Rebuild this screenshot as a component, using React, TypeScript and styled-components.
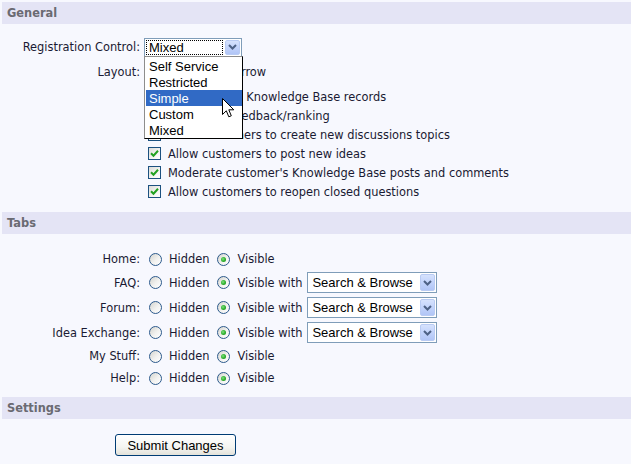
import React from "react";
import styled, { createGlobalStyle } from "styled-components";

const Global = createGlobalStyle`
  html, body { margin: 0; padding: 0; background: #f7f8fe; }
  body { font-family: "DejaVu Sans", Verdana, sans-serif; font-size: 11.4px; color: #1a1a33; }
`;

const Page = styled.div`
  padding: 2px 0 0 2px;
  min-height: 462px;
`;

const SectionHeader = styled.div`
  height: 22px;
  line-height: 22px;
  background: #e4e4f5;
  padding-left: 5px;
  font-weight: bold;
  font-size: 11.4px;
  color: #6a6a72;
`;

const Form = styled.div<{ $pt: number; $pb: number }>`
  display: grid;
  grid-template-columns: 138px 1fr;
  column-gap: 4px;
  padding: ${(p) => p.$pt}px 0 ${(p) => p.$pb}px;
`;

const Label = styled.div<{ $h: number }>`
  height: ${(p) => p.$h}px;
  display: flex;
  align-items: center;
  justify-content: flex-end;
  white-space: nowrap;
`;

const Control = styled.div<{ $h?: number; $pl?: number }>`
  ${(p) => (p.$h ? `height: ${p.$h}px;` : "")}
  padding-left: ${(p) => p.$pl ?? 0}px;
  display: flex;
  align-items: center;
  white-space: nowrap;
`;

const CheckList = styled.div`
  display: flex;
  flex-direction: column;
  padding-top: 3px;
`;

const CheckRow = styled.label`
  height: 19px;
  display: flex;
  align-items: center;
  padding-left: 4px;
`;

const Box = styled.span`
  width: 11px;
  height: 11px;
  border: 1px solid #1c5180;
  background: linear-gradient(135deg, #dcdcd7 0%, #f4f4f2 60%, #ffffff 100%);
  margin-right: 7px;
  display: inline-flex;
  align-items: center;
  justify-content: center;
  flex: none;
`;

const RadioOpt = styled.label`
  display: inline-flex;
  align-items: center;
  margin-right: 8px;
`;

const RadioCircle = styled.span<{ $on?: boolean }>`
  width: 11px;
  height: 11px;
  border-radius: 50%;
  border: 1px solid #2c5a8c;
  background: linear-gradient(135deg, #d4d4ce 0%, #f2f2f0 55%, #ffffff 100%);
  margin: 0 7px 0 0;
  display: inline-flex;
  align-items: center;
  justify-content: center;
  flex: none;
  &::after {
    content: "";
    display: ${(p) => (p.$on ? "block" : "none")};
    width: 5px;
    height: 5px;
    border-radius: 50%;
    background: radial-gradient(circle at 40% 40%, #7fe07f 0%, #2aae2a 55%, #1a7f1a 100%);
  }
`;

const SelectBox = styled.div<{ $w: number; $h: number; $ml?: number }>`
  position: relative;
  width: ${(p) => p.$w}px;
  height: ${(p) => p.$h}px;
  margin-left: ${(p) => p.$ml ?? 0}px;
  box-sizing: border-box;
  border: 1px solid #7f9db9;
  background: #fff;
  display: flex;
  align-items: center;
  font-family: "Liberation Sans", Arial, sans-serif;
  font-size: 13px;
  color: #000;
  flex: none;
`;

const SelectText = styled.span<{ $focus?: boolean }>`
  flex: 1;
  align-self: stretch;
  margin: 1px;
  padding-left: 3px;
  display: flex;
  align-items: center;
  outline: ${(p) => (p.$focus ? "1px dotted #000" : "none")};
  outline-offset: -1px;
`;

const ArrowBtn = styled.span`
  width: 15px;
  align-self: stretch;
  margin: 1px;
  box-sizing: border-box;
  border: 1px solid #b9cbf3;
  border-radius: 2px;
  background: linear-gradient(180deg, #d6e2fd 0%, #c2d3fb 50%, #b1c5f6 100%);
  display: flex;
  align-items: center;
  justify-content: center;
`;

const DropList = styled.div`
  position: absolute;
  left: -1px;
  top: 100%;
  width: 99px;
  box-sizing: border-box;
  border-left: 1px solid #8d8d8d;
  border-top: 1px solid #8d8d8d;
  border-right: 1px solid #000;
  border-bottom: 1px solid #000;
  background: #fff;
  z-index: 5;
  padding: 1px 0 0 1px;
`;

const DropItem = styled.div<{ $sel?: boolean }>`
  height: 16.2px;
  box-sizing: border-box;
  padding: 2px 0 0 3px;
  line-height: 14px;
  font-family: "Liberation Sans", Arial, sans-serif;
  font-size: 13px;
  color: ${(p) => (p.$sel ? "#fff" : "#000")};
  background: ${(p) => (p.$sel ? "#316ac5" : "transparent")};
`;

const Cursor = styled.svg`
  position: absolute;
  left: 77px;
  top: 59px;
  z-index: 6;
`;

const SettingsBody = styled.div`
  padding: 15px 0 0 113px;
`;

const Button = styled.button`
  width: 121px;
  height: 22px;
  border: 1px solid #003c74;
  border-radius: 3px;
  background: linear-gradient(180deg, #ffffff 0%, #f5f5f1 60%, #e3e2da 100%);
  font-family: "Liberation Sans", Arial, sans-serif;
  font-size: 13px;
  color: #000;
  padding: 0;
`;

const Chevron = () => (
  <svg width="9" height="6" viewBox="0 0 9 6">
    <path d="M1 1 L4.5 4.5 L8 1" stroke="#4d6185" strokeWidth="2" fill="none" />
  </svg>
);

const Check = () => (
  <Box>
    <svg width="9" height="9" viewBox="0 0 9 9">
      <path d="M1 4.2 L3.5 6.7 L8 1.8" stroke="#21a121" strokeWidth="2" fill="none" />
    </svg>
  </Box>
);

const Radio = ({ on, text }: { on?: boolean; text: string }) => (
  <RadioOpt>
    <RadioCircle $on={on} />
    {text}
  </RadioOpt>
);

const SearchSelect = () => (
  <SelectBox $w={130} $h={21} $ml={-3}>
    <SelectText>Search &amp; Browse</SelectText>
    <ArrowBtn>
      <Chevron />
    </ArrowBtn>
  </SelectBox>
);

const options = ["Self Service", "Restricted", "Simple", "Custom", "Mixed"];

const checks = [
  "Show related Knowledge Base records",
  "Allow user feedback/ranking",
  "Allow customers to create new discussions topics",
  "Allow customers to post new ideas",
  "Moderate customer's Knowledge Base posts and comments",
  "Allow customers to reopen closed questions",
];

const tabs: { name: string; h: number; sel?: boolean }[] = [
  { name: "Home", h: 22 },
  { name: "FAQ", h: 25, sel: true },
  { name: "Forum", h: 25, sel: true },
  { name: "Idea Exchange", h: 25, sel: true },
  { name: "My Stuff", h: 22 },
  { name: "Help", h: 22 },
];

export default function App() {
  return (
    <Page>
      <Global />
      <SectionHeader>General</SectionHeader>
      <Form $pt={10} $pb={11}>
        <Label $h={26}>Registration Control:</Label>
        <Control $h={26}>
          <SelectBox $w={98} $h={19}>
            <SelectText $focus>Mixed</SelectText>
            <ArrowBtn>
              <Chevron />
            </ArrowBtn>
            <DropList>
              {options.map((o) => (
                <DropItem key={o} $sel={o === "Simple"}>
                  {o}
                </DropItem>
              ))}
            </DropList>
            <Cursor width="13" height="20" viewBox="0 0 13 20">
              <path
                d="M0.5 0.5 L0.5 16.5 L4.3 12.8 L6.8 18.8 L9.3 17.8 L6.8 11.8 L11.8 11.8 Z"
                fill="#fff"
                stroke="#000"
                strokeWidth="1"
              />
            </Cursor>
          </SelectBox>
        </Control>
        <Label $h={24}>Layout:</Label>
        <Control $h={24} $pl={5}>
          <Radio text="Wide" />
          <Radio on text="Narrow" />
        </Control>
        <div />
        <Control>
          <CheckList>
            {checks.map((c) => (
              <CheckRow key={c}>
                <Check />
                {c}
              </CheckRow>
            ))}
          </CheckList>
        </Control>
      </Form>
      <SectionHeader>Tabs</SectionHeader>
      <Form $pt={14} $pb={8}>
        {tabs.map((t) => (
          <React.Fragment key={t.name}>
            <Label $h={t.h}>{t.name}:</Label>
            <Control $h={t.h} $pl={5}>
              <Radio text="Hidden" />
              <Radio on text={t.sel ? "Visible with" : "Visible"} />
              {t.sel && <SearchSelect />}
            </Control>
          </React.Fragment>
        ))}
      </Form>
      <SectionHeader>Settings</SectionHeader>
      <SettingsBody>
        <Button>Submit Changes</Button>
      </SettingsBody>
    </Page>
  );
}
